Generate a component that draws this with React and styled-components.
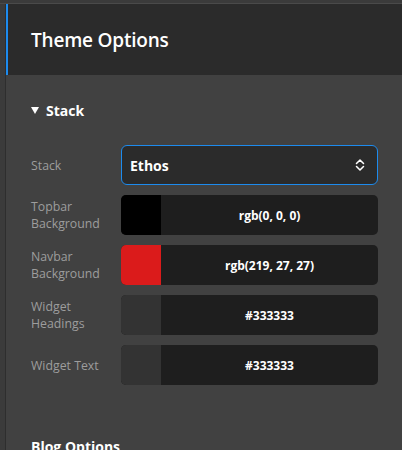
import styled, { createGlobalStyle } from "styled-components";

const GlobalStyle = createGlobalStyle`
  html, body {
    margin: 0;
    padding: 0;
    background: #3b3b3b;
  }
  body {
    font-family: "Open Sans", "Noto Sans", "Liberation Sans", sans-serif;
    -webkit-font-smoothing: antialiased;
  }
`;

const Frame = styled.div`
  width: 402px;
  height: 450px;
  overflow: hidden;
  box-sizing: border-box;
  padding: 4px 0 0 6px;
  background: #3b3b3b;
  box-shadow: inset 0 3px 0 #3b3b3b, inset 0 4px 0 #4a4a4a;
`;

const Panel = styled.div`
  display: flex;
  flex-direction: column;
  height: 100%;
  background: #414141;
  border-left: 1px solid #2e2e2e;
  margin-left: -1px;
`;

const Header = styled.div`
  display: flex;
  align-items: center;
  height: 71px;
  flex-shrink: 0;
  box-sizing: border-box;
  padding-left: 23px;
  background: #2b2b2b;
  border-left: 2px solid #1d8bee;
`;

const Title = styled.h1`
  margin: 0;
  color: #ffffff;
  font-size: 19px;
  font-weight: 600;
  letter-spacing: -0.2px;
`;

const Body = styled.div`
  padding: 25px 24px 0 25px;
`;

const SectionTitle = styled.div`
  display: flex;
  align-items: center;
  gap: 7px;
  height: 20px;
  color: #ffffff;
  font-size: 14px;
  font-weight: 700;
  margin-top: ${(p) => p.$top || 0}px;
`;

const Caret = styled.span`
  width: 0;
  height: 0;
  border-left: 4.5px solid transparent;
  border-right: 4.5px solid transparent;
  border-top: 7px solid #ffffff;
`;

const Rows = styled.div`
  display: flex;
  flex-direction: column;
  gap: 10px;
  margin-top: 25px;
`;

const Row = styled.div`
  display: grid;
  grid-template-columns: 90px 1fr;
  align-items: center;
`;

const Label = styled.div`
  color: #9d9d9d;
  font-size: 12.3px;
  line-height: 17px;
  padding-right: 8px;
`;

const Select = styled.div`
  display: flex;
  align-items: center;
  justify-content: space-between;
  height: 40px;
  box-sizing: border-box;
  padding: 0 10px 0 8px;
  background: #2b2b2b;
  border: 1px solid #1d8bee;
  border-radius: 6px;
  color: #ffffff;
  font-size: 14px;
  font-weight: 700;
`;

const ColorField = styled.div`
  display: flex;
  height: 40px;
  border-radius: 5px;
  overflow: hidden;
  background: #1e1e1e;
`;

const Swatch = styled.div`
  width: 40px;
  flex-shrink: 0;
  background: ${(p) => p.$color};
`;

const ColorValue = styled.div`
  flex: 1;
  display: flex;
  align-items: center;
  justify-content: center;
  color: #ffffff;
  font-size: 12px;
  font-weight: 700;
`;

const UpDown = () => (
  <svg width="14" height="14" viewBox="0 0 24 24" fill="none" stroke="#ffffff" strokeWidth="2.6" strokeLinecap="round" strokeLinejoin="round">
    <path d="m6 9.5 6-6 6 6" />
    <path d="m6 14.5 6 6 6-6" />
  </svg>
);

const colors = [
  { label: ["Topbar", "Background"], swatch: "#000000", value: "rgb(0, 0, 0)" },
  { label: ["Navbar", "Background"], swatch: "rgb(219, 27, 27)", value: "rgb(219, 27, 27)" },
  { label: ["Widget", "Headings"], swatch: "#333333", value: "#333333" },
  { label: ["Widget Text"], swatch: "#333333", value: "#333333" },
];

export default function App() {
  return (
    <>
      <GlobalStyle />
      <Frame>
        <Panel>
          <Header>
            <Title>Theme Options</Title>
          </Header>
          <Body>
            <SectionTitle>
              <Caret />
              Stack
            </SectionTitle>
            <Rows>
              <Row>
                <Label>Stack</Label>
                <Select>
                  Ethos
                  <UpDown />
                </Select>
              </Row>
              {colors.map((c) => (
                <Row key={c.label.join(" ")}>
                  <Label>
                    {c.label.map((l) => (
                      <div key={l}>{l}</div>
                    ))}
                  </Label>
                  <ColorField>
                    <Swatch $color={c.swatch} />
                    <ColorValue>{c.value}</ColorValue>
                  </ColorField>
                </Row>
              ))}
            </Rows>
            <SectionTitle $top={51}>Blog Options</SectionTitle>
          </Body>
        </Panel>
      </Frame>
    </>
  );
}
